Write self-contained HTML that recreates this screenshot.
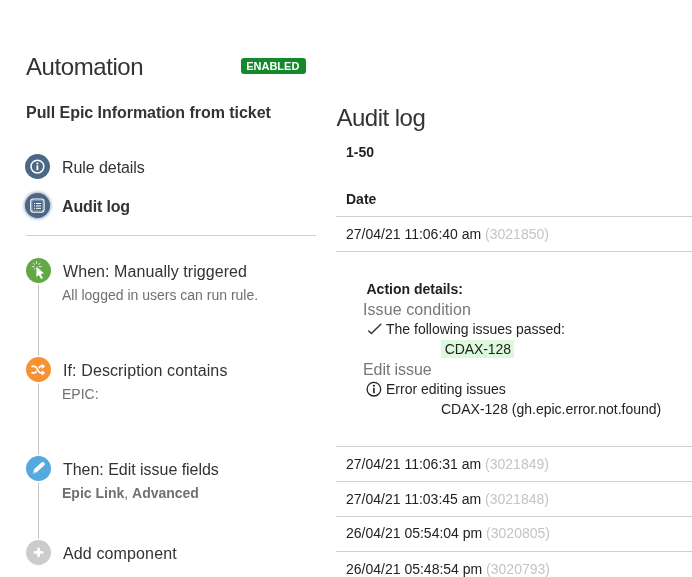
<!DOCTYPE html>
<html><head><meta charset="utf-8">
<style>
html,body{margin:0;padding:0;background:#fff;}
body{width:692px;height:577px;position:relative;overflow:hidden;font-family:"Liberation Sans",sans-serif;color:#172b4d;}
.t{position:absolute;white-space:nowrap;line-height:1;}
.h1{font-size:24px;color:#333;}
.b{font-weight:bold;}
.n16{font-size:16px;color:#333;}
.s14{font-size:14px;color:#707070;}
.r14{font-size:14px;color:#222;}
.g{color:#c4c4c4;}
.ln{position:absolute;height:1px;background:#d0d0d0;}
.ic{position:absolute;width:25px;height:25px;border-radius:50%;}
.cmp{box-shadow:0 0 0 1.5px #fff;}
.ic svg{position:absolute;left:0;top:0;}
</style></head><body><div id="wrap" style="position:absolute;left:0;top:0;width:692px;height:577px;will-change:transform;">

<div class="t h1" id="h-auto" style="left:26px;top:55px;letter-spacing:-0.42px;">Automation</div>
<div class="t" id="badge" style="left:241px;top:58px;width:63.6px;padding-right:1.4px;height:16px;background:#14892c;border-radius:3px;color:#fff;font-size:11px;font-weight:bold;line-height:16px;text-align:center;">ENABLED</div>
<div class="t b" id="rule-name" style="left:26px;top:105px;font-size:16px;color:#333;letter-spacing:-0.045px;">Pull Epic Information from ticket</div>

<div class="ic" id="ic-info" style="left:25px;top:154px;background:#4a6785;">
<svg width="25" height="25" viewBox="0 0 25 25"><circle cx="12.4" cy="12.6" r="6.4" fill="none" stroke="#fff" stroke-width="1.5"/><circle cx="12.4" cy="9.5" r="1.1" fill="#fff"/><rect x="11.5" y="11.3" width="1.8" height="4.9" rx=".5" fill="#fff"/></svg></div>
<div class="t n16" id="t-rule" style="left:62px;top:160px;letter-spacing:-0.07px;">Rule details</div>
<div class="ic" id="ic-audit" style="left:25px;top:193px;background:#4a6785;box-shadow:0 0 3px 1px rgba(74,103,133,.55);">
<svg width="25" height="25" viewBox="0 0 25 25"><rect x="5.7" y="6" width="13.4" height="13.2" rx="2.6" fill="none" stroke="#fff" stroke-width="1.1"/><rect x="7" y="7.3" width="10.8" height="10.6" rx="1.4" fill="none" stroke="#fff" stroke-opacity=".45" stroke-width=".8"/>
<g fill="#fff"><rect x="9" y="10" width="1.1" height="1"/><rect x="11" y="10" width="5" height="1"/><rect x="9" y="12.4" width="1.1" height="1"/><rect x="11" y="12.4" width="5" height="1"/><rect x="9" y="14.8" width="1.1" height="1"/><rect x="11" y="14.8" width="5" height="1"/></g></svg></div>
<div class="t n16 b" id="t-audit" style="left:62px;top:199px;letter-spacing:-0.15px;">Audit log</div>
<div class="ln" id="hr" style="left:26px;top:235px;width:290px;"></div>

<div class="ln" id="vline" style="left:37.9px;top:256px;width:1.2px;height:311px;background:#c6c6c6;"></div>

<div class="ic cmp" id="ic-when" style="left:26px;top:257.8px;background:#62a845;">
<svg width="25" height="25" viewBox="0 0 25 25"><path d="M10.4 8.6 L10.4 18.9 L12.8 17.1 L15.2 21 L16.9 20 L14.7 16.2 L17.9 15.2 Z" fill="#fff"/>
<g stroke="#fff" stroke-width=".9" stroke-linecap="round" opacity=".85"><path d="M10.5 3.6V5.6M6.2 8.6H8.2M13.3 8.6H15.5M7.5 5.2L8.5 6.6M13.9 5.2L12.9 6.6M8.4 10.5L8.3 11.1"/></g></svg></div>
<div class="t n16" id="t-when" style="left:63px;top:264px;letter-spacing:0.07px;">When: Manually triggered</div>
<div class="t s14" id="t-when2" style="left:62px;top:288px;">All logged in users can run rule.</div>

<div class="ic cmp" id="ic-if" style="left:26px;top:357px;background:#f79232;">
<svg width="25" height="25" viewBox="0 0 25 25"><g fill="none" stroke-width="1.8"><path stroke="#fff" d="M5.4 15.9H8.4C11.6 15.9 11.6 9.3 14.8 9.3H16.5"/><path stroke="#f79232" stroke-width="3.4" d="M8.6 9.3C11.6 9.3 11.6 15.9 14.6 15.9"/><path stroke="#fff" d="M5.4 9.3H8.4C11.6 9.3 11.6 15.9 14.8 15.9H16.5"/></g><path d="M15.8 6.7L19.2 9.3L15.8 11.9ZM15.8 13.3L19.2 15.9L15.8 18.5Z" fill="#fff"/></svg></div>
<div class="t n16" id="t-if" style="left:63px;top:363px;letter-spacing:0.11px;">If: Description contains</div>
<div class="t s14" id="t-if2" style="left:62px;top:387px;">EPIC:</div>

<div class="ic cmp" id="ic-then" style="left:26px;top:456px;background:#54a9df;">
<svg width="25" height="25" viewBox="0 0 25 25"><path d="M9.7 14.5L16.8 8.1" stroke="#fff" stroke-width="4" stroke-linecap="round"/><path d="M7.9 15L7.3 17.3L9.6 16.8" fill="none" stroke="#fff" stroke-width=".7" stroke-linejoin="round" opacity=".85"/></svg></div>
<div class="t n16" id="t-then" style="left:63px;top:462px;letter-spacing:-0.03px;">Then: Edit issue fields</div>
<div class="t s14 b" id="t-then2" style="left:62px;top:486px;">Epic Link<span style="font-weight:normal">, </span>Advanced</div>

<div class="ic cmp" id="ic-add" style="left:26px;top:540px;background:#cccccc;">
<svg width="25" height="25" viewBox="0 0 25 25"><path d="M9 12.4H16.2M12.6 8.8V16" stroke="#fff" stroke-width="2.7" stroke-linecap="round"/></svg></div>
<div class="t n16" id="t-add" style="left:63px;top:546px;letter-spacing:0.13px;">Add component</div>

<!-- right -->
<div class="t h1" id="h-audit" style="left:336.5px;top:106px;letter-spacing:-0.52px;">Audit log</div>
<div class="t b" id="t-150" style="left:346px;top:145px;font-size:14px;color:#222;">1-50</div>
<div class="t b" id="t-date" style="left:346px;top:192px;font-size:14px;color:#222;">Date</div>
<div class="ln" id="l1" style="left:336px;top:216px;width:356px;"></div>
<div class="t r14" id="r1" style="left:346px;top:227px;">27/04/21 11:06:40 am <span class="g">(3021850)</span></div>
<div class="ln" id="l2" style="left:336px;top:251px;width:356px;"></div>

<div class="t b r14" id="t-act" style="left:366.5px;top:282px;">Action details:</div>
<div class="t" id="t-ic" style="left:363px;top:302px;font-size:16px;color:#777;letter-spacing:0.08px;">Issue condition</div>
<svg class="t" id="i-check" style="left:366px;top:322px;" width="17" height="14" viewBox="0 0 17 14"><path d="M2.7 8.9L5.4 11.5L14.8 2.3" fill="none" stroke="#333" stroke-width="1.45" stroke-linecap="round" stroke-linejoin="round"/></svg>
<svg class="t" id="i-info" style="left:365px;top:380px;" width="18" height="18" viewBox="0 0 18 18"><circle cx="8.9" cy="9.2" r="6.8" fill="none" stroke="#222" stroke-width="1.3"/><circle cx="8.9" cy="5.7" r="1.05" fill="#222"/><rect x="8.1" y="7.7" width="1.6" height="5.6" rx=".4" fill="#222"/></svg>
<div class="t r14" id="t-pass" style="left:386px;top:322px;">The following issues passed:</div>
<div class="t" id="lozbg" style="left:441.4px;top:340.1px;width:72.3px;height:17.6px;background:#dcf9dc;"></div>
<div class="t r14" id="loz" style="left:444.8px;top:342px;letter-spacing:-0.1px;">CDAX-128</div>
<div class="t" id="t-ei" style="left:363px;top:362px;font-size:16px;color:#777;letter-spacing:-0.08px;">Edit issue</div>
<div class="t r14" id="t-err" style="left:386px;top:382px;">Error editing issues</div>
<div class="t r14" id="t-err2" style="left:441px;top:402px;">CDAX-128 (gh.epic.error.not.found)</div>

<div class="ln" id="l3" style="left:336px;top:446px;width:356px;"></div>
<div class="t r14" id="r2" style="left:346px;top:457px;">27/04/21 11:06:31 am <span class="g">(3021849)</span></div>
<div class="ln" id="l4" style="left:336px;top:481px;width:356px;"></div>
<div class="t r14" id="r3" style="left:346px;top:492px;">27/04/21 11:03:45 am <span class="g">(3021848)</span></div>
<div class="ln" id="l5" style="left:336px;top:516px;width:356px;"></div>
<div class="t r14" id="r4" style="left:346px;top:526px;">26/04/21 05:54:04 pm <span class="g">(3020805)</span></div>
<div class="ln" id="l6" style="left:336px;top:551px;width:356px;"></div>
<div class="t r14" id="r5" style="left:346px;top:562px;">26/04/21 05:48:54 pm <span class="g">(3020793)</span></div>

</div></body></html>
